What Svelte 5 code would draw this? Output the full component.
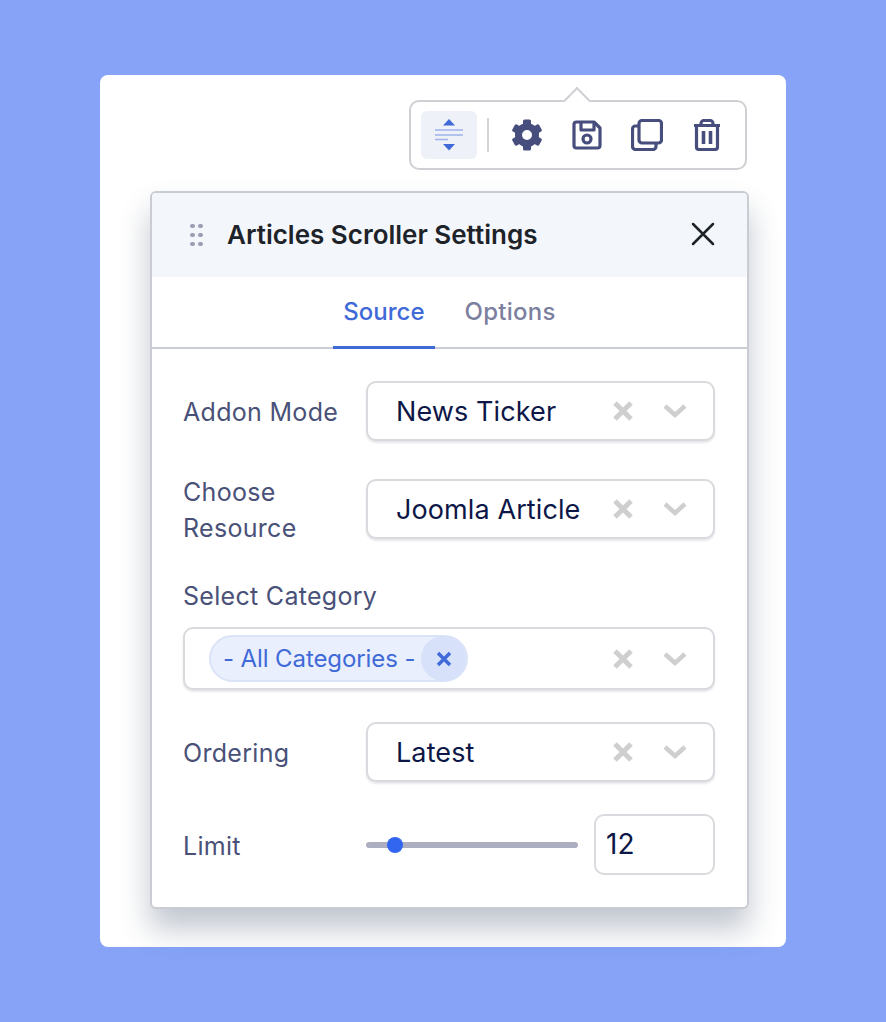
<script>
  const fields = [
    { label: ['Addon Mode'], value: 'News Ticker' },
    { label: ['Choose', 'Resource'], value: 'Joomla Article' }
  ];
  const gearTeeth = [0, 60, 120, 180, 240, 300];
</script>

{#snippet clearAndCaret()}
  <svg class="clear" viewBox="0 0 22 22" aria-hidden="true">
    <path d="M3 3l16 16M19 3L3 19" />
  </svg>
  <svg class="caret" viewBox="0 0 26 16" aria-hidden="true">
    <path d="M3 3l10 9 10-9" />
  </svg>
{/snippet}

{#snippet select(value)}
  <div class="select">
    <span class="select-value">{value}</span>
    {@render clearAndCaret()}
  </div>
{/snippet}

<div class="page">
  <div class="card">
    <div class="toolbar">
      <span class="toolbar-arrow"></span>
      <button class="tool tool-active" aria-label="Spacing">
        <svg width="30" height="36" viewBox="0 0 30 36" aria-hidden="true">
          <path class="tri" d="M15 2l6 6.500H9z" />
          <path class="tri" d="M15 33.500l6-6.500H9z" />
          <path class="lines" d="M1 13h28M1 18h28M1 22.500h13" />
        </svg>
      </button>
      <span class="tool-sep"></span>
      <button class="tool" aria-label="Settings">
        <svg width="32" height="32" viewBox="0 0 32 32" aria-hidden="true">
          <circle class="gear-ring" cx="16" cy="16" r="8.500" />
          {#each gearTeeth as angle}
            <rect class="solid" x="12" y="0.500" width="8" height="8" rx="1.500" transform="rotate({angle} 16 16)" />
          {/each}
        </svg>
      </button>
      <button class="tool" aria-label="Save">
        <svg width="30" height="30" viewBox="0 0 30 30" aria-hidden="true">
          <path class="stroke" d="M4.500 2H22l6 6v17.500a2.500 2.500 0 0 1-2.500 2.500h-21A2.500 2.500 0 0 1 2 25.500v-21A2.500 2.500 0 0 1 4.500 2z" />
          <path class="stroke" d="M9 2v8h13V2" />
          <circle class="stroke" cx="15" cy="19" r="4" />
        </svg>
      </button>
      <button class="tool" aria-label="Copy">
        <svg width="32" height="32" viewBox="0 0 32 32" aria-hidden="true">
          <rect class="stroke" x="8" y="1.500" width="22.500" height="22.500" rx="3" />
          <path class="stroke" d="M8 7H4.500a3 3 0 0 0-3 3v17.500a3 3 0 0 0 3 3H22a3 3 0 0 0 3-3V24" />
        </svg>
      </button>
      <button class="tool" aria-label="Delete">
        <svg width="28" height="32" viewBox="0 0 28 32" aria-hidden="true">
          <path class="stroke" d="M1 6.500h26M8 6V4.500a3 3 0 0 1 3-3h6a3 3 0 0 1 3 3V6M3.500 7v21a2.500 2.500 0 0 0 2.500 2.500h16a2.500 2.500 0 0 0 2.500-2.500V7" />
          <path class="stroke bars" d="M10.500 12v13M17.500 12v13" />
        </svg>
      </button>
    </div>

    <div class="panel">
      <header class="panel-head">
        <span class="grip" aria-hidden="true">
          {#each Array(6) as _}<i></i>{/each}
        </span>
        <h2>Articles Scroller Settings</h2>
        <button class="close" aria-label="Close">
          <svg width="24" height="24" viewBox="0 0 24 24" aria-hidden="true">
            <path d="M2 2l20 20M22 2L2 22" />
          </svg>
        </button>
      </header>

      <nav class="tabs">
        <span class="tab tab-active">Source</span>
        <span class="tab tab-options">Options</span>
      </nav>

      <div class="form">
        {#each fields as field}
          <div class="row">
            <div class="label">
              {#each field.label as line}<div>{line}</div>{/each}
            </div>
            {@render select(field.value)}
          </div>
        {/each}

        <div class="stacked">
          <div class="label">Select Category</div>
          <div class="select select-multi">
            <span class="chip">
              <span class="chip-text">- All Categories -</span>
              <span class="chip-x">
                <svg width="16" height="16" viewBox="0 0 16 16" aria-hidden="true">
                  <path d="M2 2l12 12M14 2L2 14" />
                </svg>
              </span>
            </span>
            {@render clearAndCaret()}
          </div>
        </div>

        <div class="row">
          <div class="label">Ordering</div>
          {@render select('Latest')}
        </div>

        <div class="row">
          <div class="label">Limit</div>
          <div class="limit">
            <div class="slider"><span class="thumb"></span></div>
            <div class="number">12</div>
          </div>
        </div>
      </div>
    </div>
  </div>
</div>

<style>
  :global(body) {
    margin: 0;
    background: #86a3f8;
  }

  .page {
    box-sizing: border-box;
    height: 1022px;
    padding: 75px 100px;
    font-family: Inter, "Liberation Sans", sans-serif;
  }

  .card {
    box-sizing: border-box;
    width: 686px;
    height: 872px;
    padding: 25px 37px 0 50px;
    background: #fff;
    border-radius: 8px;
    display: flex;
    flex-direction: column;
    align-items: flex-end;
  }

  .toolbar {
    position: relative;
    box-sizing: border-box;
    width: 338px;
    height: 70px;
    margin-right: 2px;
    padding: 0 10px;
    border: 2px solid #cfd0d4;
    border-radius: 10px;
    display: flex;
    align-items: center;
    background: #fff;
  }

  .toolbar-arrow {
    position: absolute;
    top: -11px;
    left: 156px;
    width: 20px;
    height: 20px;
    background: #fff;
    border-left: 2px solid #cfd0d4;
    border-top: 2px solid #cfd0d4;
    box-sizing: border-box;
    transform: rotate(45deg);
  }

  .tool {
    flex: none;
    border: 0;
    padding: 0;
    background: none;
    width: 60px;
    height: 48px;
    display: flex;
    align-items: center;
    justify-content: center;
  }

  .tool-active {
    width: 56px;
    background: #eff1f8;
    border-radius: 6px;
  }

  .tool-sep {
    flex: none;
    width: 2px;
    height: 34px;
    margin: 0 8px 0 10px;
    background: #d4d5da;
  }

  .tri {
    fill: #3f6ad8;
  }

  .lines {
    fill: none;
    stroke: #9fb2ea;
    stroke-width: 1.600;
  }

  .solid {
    fill: #474e7d;
  }

  .gear-ring {
    fill: none;
    stroke: #474e7d;
    stroke-width: 7;
  }

  .stroke {
    fill: none;
    stroke: #474e7d;
    stroke-width: 3.200;
    stroke-linejoin: round;
  }

  .bars {
    stroke-width: 3.600;
  }

  .panel {
    box-sizing: border-box;
    width: 599px;
    margin-top: 21px;
    background: #fff;
    border: 2px solid #c9ccd2;
    border-radius: 6px;
    box-shadow: 0 20px 30px rgba(50, 65, 95, 0.3);
    overflow: hidden;
  }

  .panel-head {
    box-sizing: border-box;
    height: 84px;
    display: flex;
    align-items: center;
    padding: 0 32px 2px 38px;
    background: #f3f7fb;
  }

  .grip {
    width: 14px;
    display: grid;
    grid-template-columns: 4.500px 4.500px;
    column-gap: 3.500px;
    row-gap: 4.500px;
    margin: 2px 23px 0 0;
  }

  .grip i {
    width: 4.500px;
    height: 4.500px;
    border-radius: 50%;
    background: #9b9eb3;
  }

  h2 {
    flex: 1;
    margin: 0;
    font-size: 26px;
    font-weight: 600;
    color: #1d2329;
  }

  .close {
    border: 0;
    padding: 0;
    background: none;
    height: 24px;
  }

  .close path {
    fill: none;
    stroke: #1d2329;
    stroke-width: 2.500;
    stroke-linecap: round;
  }

  .tabs {
    height: 70px;
    display: flex;
    justify-content: center;
    gap: 20px;
    border-bottom: 2px solid #c9ccd2;
  }

  .tab {
    padding: 20px 10px 0;
    font-size: 24px;
    font-weight: 500;
    color: #7c809f;
    height: 49px;
  }

  .tab-options {
    letter-spacing: 0.25px;
  }

  .tab-active {
    color: #3f6ad8;
    border-bottom: 3px solid #3f6ad8;
  }

  .form {
    padding: 32px 32px 32px 31px;
    display: flex;
    flex-direction: column;
    gap: 32px;
  }

  .row {
    display: flex;
    align-items: center;
  }

  .row .label {
    width: 183px;
    flex: none;
  }

  .label {
    padding-top: 1px;
    margin-bottom: -1px;
    font-size: 25px;
    line-height: 36px;
    letter-spacing: 0.3px;
    color: #4a5178;
  }

  .select {
    box-sizing: border-box;
    flex: 1;
    height: 60px;
    display: flex;
    align-items: center;
    padding: 0 25px 0 28px;
    background: #fff;
    border: 2px solid #d9dade;
    border-radius: 10px;
    box-shadow: 0 2px 2px rgba(60, 60, 80, 0.12);
  }

  .select-value {
    flex: 1;
    font-size: 27px;
    letter-spacing: 0.1px;
    color: #0d1747;
  }

  .clear {
    width: 22px;
    height: 22px;
    margin-right: 28px;
  }

  .clear path {
    fill: none;
    stroke: #cfcfcf;
    stroke-width: 5;
  }

  .caret {
    width: 26px;
    height: 16px;
  }

  .caret path {
    fill: none;
    stroke: #cfcfcf;
    stroke-width: 4.500;
  }

  .stacked .label {
    margin-bottom: 13px;
  }

  .select-multi {
    height: 63px;
    padding-left: 24px;
  }

  .chip {
    box-sizing: border-box;
    height: 47px;
    display: flex;
    align-items: center;
    margin-right: auto;
    background: #e9effc;
    border: 2px solid #dbe3f8;
    border-radius: 24px;
    padding-left: 12px;
    font-size: 24px;
    letter-spacing: -0.1px;
    color: #3f6ad8;
  }

  .chip-text {
    margin-right: 6px;
  }

  .chip-x {
    width: 45px;
    height: 45px;
    border-radius: 50%;
    background: #d7e1f9;
    display: flex;
    align-items: center;
    justify-content: center;
  }

  .chip-x path {
    fill: none;
    stroke: #3f6ad8;
    stroke-width: 3.500;
  }

  .limit {
    flex: 1;
    display: flex;
    align-items: center;
    gap: 16px;
  }

  .slider {
    position: relative;
    flex: 1;
    height: 6px;
    background: #adafc1;
    border-radius: 3px;
  }

  .thumb {
    position: absolute;
    left: 21px;
    top: -5px;
    width: 16px;
    height: 16px;
    border-radius: 50%;
    background: #3366f0;
  }

  .number {
    box-sizing: border-box;
    width: 121px;
    height: 61px;
    padding: 0 10px;
    border: 2px solid #d9dade;
    border-radius: 10px;
    font-size: 28px;
    line-height: 57px;
    color: #0d1747;
  }
</style>
